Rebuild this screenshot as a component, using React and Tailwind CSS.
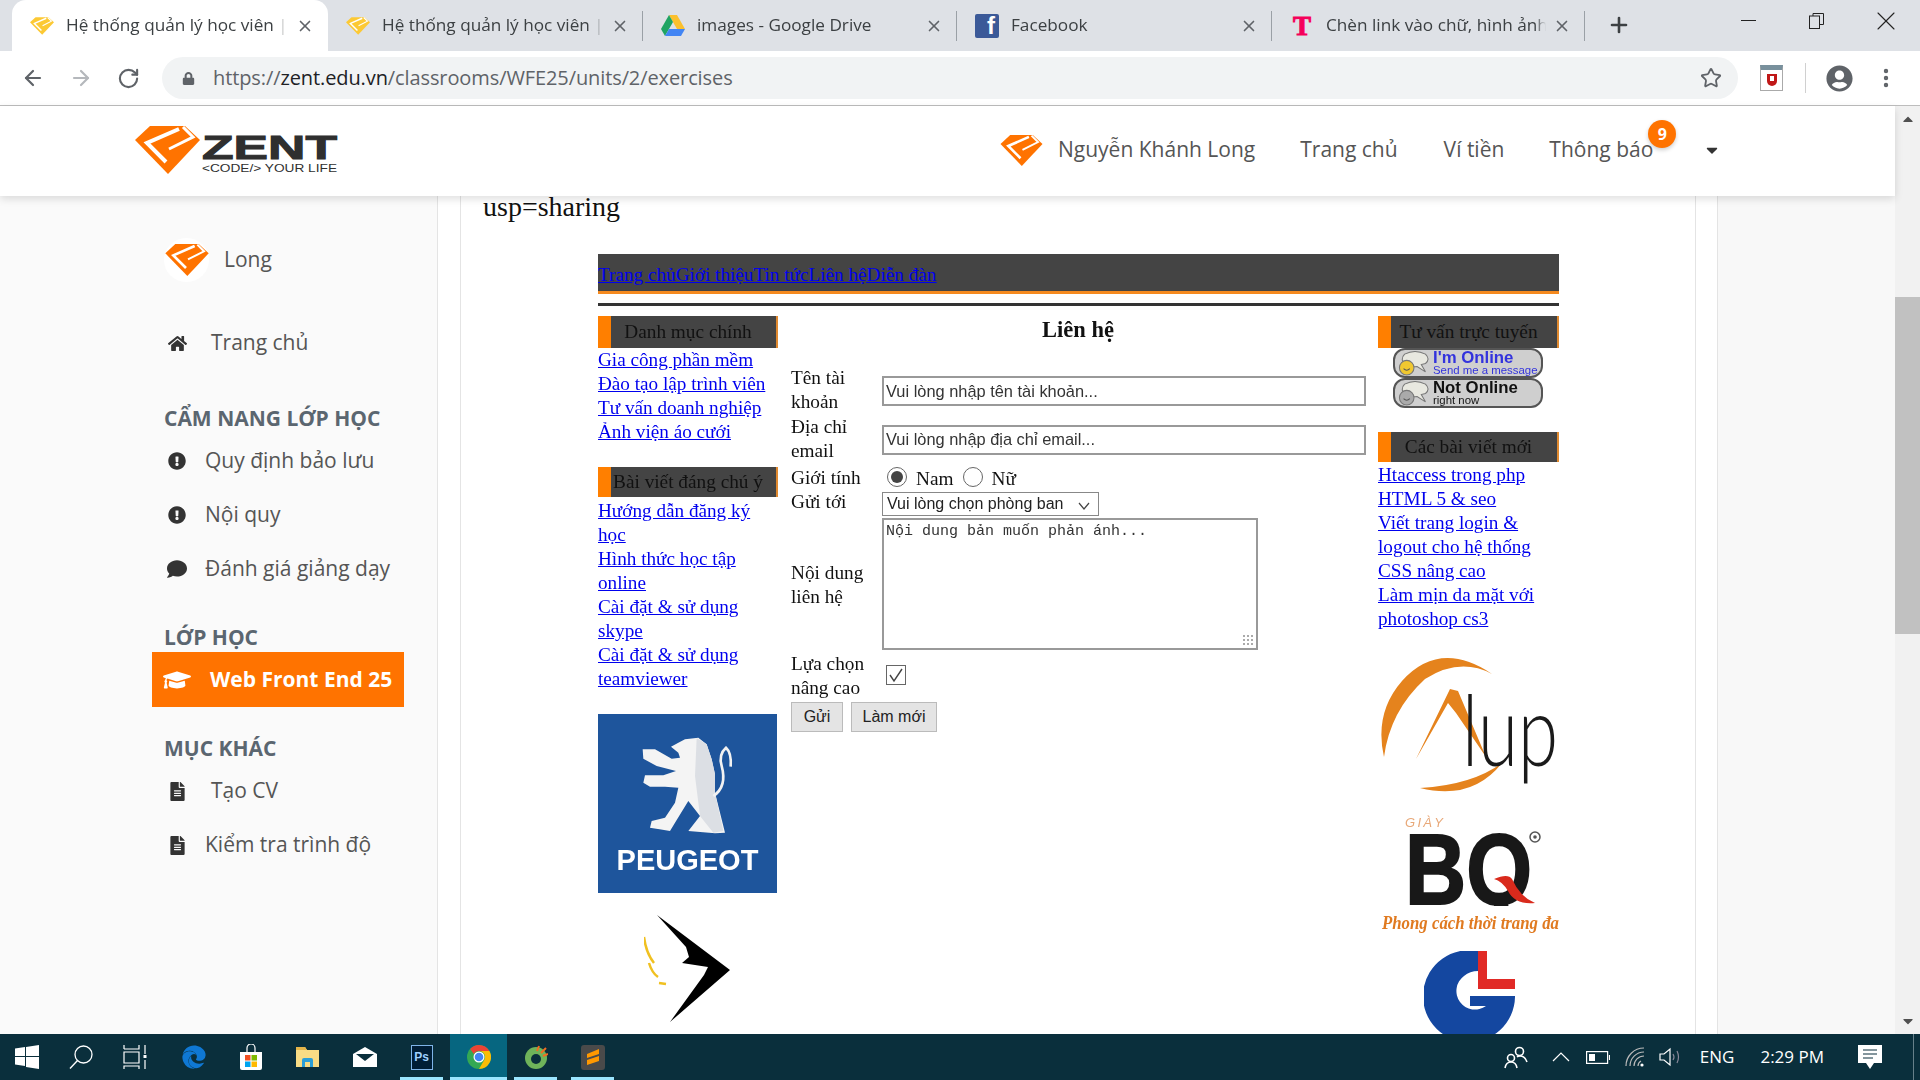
import React from 'react';
import { ArrowLeft, ArrowRight, RotateCw, Star, X, Plus, MoreVertical } from 'lucide-react';
import { FaHome, FaExclamationCircle, FaComment, FaFileAlt, FaGraduationCap, FaLock, FaEdge, FaUserCircle, FaCaretDown, FaCaretUp } from 'react-icons/fa';

const Gem = ({ className, fill = '#ff7300' }) => (
  <svg viewBox="0 0 65 48" className={className}>
    <polygon points="15,0 50,0 65,14 33,48 0,14" fill={fill} />
    <polyline points="44,3 12,17 31,36" fill="none" stroke="#fff" strokeWidth="4" />
    <polyline points="48,1 58,11 34,23" fill="none" stroke="#fff" strokeWidth="3" />
  </svg>
);

const DriveIcon = () => (
  <svg viewBox="0 0 24 21" className="w-[24px] h-[21px]">
    <polygon points="8,0 16,0 24,14 16,14" fill="#fbc02d" />
    <polygon points="8,0 12,7 4,21 0,14" fill="#1fa463" />
    <polygon points="8,14 24,14 20,21 4,21" fill="#4285f4" />
  </svg>
);

const FbIcon = () => (
  <div className="w-[24px] h-[24px] bg-[#3b5998] rounded-[2px] flex items-end justify-end pr-[4px] overflow-hidden">
    <span className="text-white font-bold text-[24px] leading-[24px] font-['Liberation_Sans',sans-serif]">f</span>
  </div>
);

const TIcon = () => (
  <div className="w-[20px] h-[24px] flex items-center justify-center">
    <span className="text-[#f5005a] font-bold text-[27px] leading-[24px] font-['Liberation_Serif',serif] [-webkit-text-stroke:1px_#f5005a]">T</span>
  </div>
);

const tabs = [
  { title: 'Hệ thống quản lý học viên | ZENT', icon: <Gem className="w-[24px] h-[18px]" fill="#fcc934" />, width: 'w-[316px]', active: true },
  { title: 'Hệ thống quản lý học viên | ZENT', icon: <Gem className="w-[24px] h-[18px]" fill="#fcc934" />, width: 'w-[315px]' },
  { title: 'images - Google Drive', icon: <DriveIcon />, width: 'w-[314px]' },
  { title: 'Facebook', icon: <FbIcon />, width: 'w-[315px]' },
  { title: 'Chèn link vào chữ, hình ảnh trong HTML', icon: <TIcon />, width: 'w-[313px]' },
];

const TabBar = () => (
  <div className="h-[51px] bg-[#dee1e6] flex pl-[12px] shrink-0 text-[#3c4043] text-[17.2px] font-['Open_Sans',sans-serif]">
    {tabs.map((t, i) => (
      <div key={i} className={`${t.width} flex items-center pl-[18px] pr-[14px] ${t.active ? 'bg-white rounded-t-[14px]' : 'relative'}`}>
        <div className="w-[24px] flex justify-center shrink-0">{t.icon}</div>
        <div className="ml-[12px] -mt-[1px] w-[220px] h-[26px] leading-[26px] overflow-hidden whitespace-nowrap [mask-image:linear-gradient(90deg,#000_95%,transparent)]">{t.title}</div>
        <X size={18} className="ml-auto text-[#5f6368]" strokeWidth={2.2} />
        {!t.active && <div className="absolute right-0 top-[11px] h-[30px] w-px bg-[#9aa0a6]" />}
      </div>
    ))}
    <Plus size={24} strokeWidth={2.6} className="ml-[22px] mt-[13px] text-[#3c4043]" />
    <div className="ml-auto flex items-start text-[#222]">
      <div className="w-[68px] h-[40px] flex items-center justify-center"><div className="w-[15px] h-px bg-[#222]" /></div>
      <div className="w-[68px] mr-[2px] h-[42px] flex items-center justify-center">
        <svg viewBox="0 0 15 16" className="w-[15px] h-[16px]" fill="none" stroke="#222" strokeWidth="1">
          <path d="M4 3V.5h10.5v11H11" />
          <rect x=".5" y="3" width="10" height="12.5" />
        </svg>
      </div>
      <div className="w-[68px] h-[42px] flex items-center justify-center"><X size={32} strokeWidth={0.8} /></div>
    </div>
  </div>
);

const ToolBar = () => (
  <div className="h-[55px] bg-white border-b border-[#bdbdbd] flex items-center shrink-0 relative">
    <ArrowLeft size={24} className="ml-[21px] text-[#5f6368]" strokeWidth={2.2} />
    <ArrowRight size={24} className="ml-[24px] text-[#b5b8bc]" strokeWidth={2.2} />
    <RotateCw size={23} className="ml-[24px] text-[#5f6368]" strokeWidth={2.2} />
    <div className="ml-[22px] w-[1576px] h-[42px] bg-[#f1f3f4] rounded-full flex items-center pl-[20px] pr-[16px]">
      <FaLock size={13} className="text-[#5f6368]" />
      <div className="ml-[18px] text-[20px] tracking-[-0.1px] font-['Open_Sans',sans-serif] text-[#5f6368]">
        https://<span className="text-[#202124]">zent.edu.vn</span>/classrooms/WFE25/units/2/exercises
      </div>
      <Star size={22} className="ml-auto text-[#5f6368]" strokeWidth={2} />
    </div>
    <div className="ml-[22px] w-[23px] h-[26px] border border-[#aaa] border-t-[5px] border-t-[#78909c] bg-white flex items-center justify-center">
      <div className="w-[10px] h-[12px] bg-[#c01818] rounded-b-[5px] flex justify-center pt-[2px]"><div className="w-[4px] h-[5px] bg-white" /></div>
    </div>
    <div className="ml-[22px] w-px h-[30px] bg-[#d0d0d0]" />
    <FaUserCircle size={27} className="ml-[20px] text-[#5f6368]" />
    <MoreVertical size={24} className="ml-[21px] text-[#5f6368]" strokeWidth={2.4} />
  </div>
);

const Header = () => (
  <div className="h-[90px] bg-white shadow-[0_3px_8px_rgba(0,0,0,0.13)] flex items-center shrink-0 relative z-10 pl-[135px] pb-[2px] font-['Open_Sans',sans-serif] text-[21px] text-[#555]">
    <div className="flex items-center">
      <Gem className="w-[65px] h-[48px]" />
      <svg viewBox="0 0 140 48" className="w-[140px] h-[48px] -ml-[1px]">
        <text x="3" y="33" fontFamily="Liberation Sans" fontWeight="700" fontSize="34" fill="#2f2f2f" textLength="135" lengthAdjust="spacingAndGlyphs" stroke="#2f2f2f" strokeWidth="1">ZENT</text>
        <text x="3" y="46" fontFamily="Liberation Sans" fontSize="11" fill="#2f2f2f" textLength="135" lengthAdjust="spacingAndGlyphs">&lt;CODE/&gt; YOUR LIFE</text>
      </svg>
    </div>
    <Gem className="ml-[661px] w-[43px] h-[31px]" />
    <span className="ml-[15px]">Nguyễn Khánh Long</span>
    <span className="ml-[45px]">Trang chủ</span>
    <span className="ml-[46px]">Ví tiền</span>
    <span className="ml-[45px] relative">
      Thông báo
      <span className="absolute -right-[23px] -top-[14px] w-[28px] h-[28px] rounded-full bg-[#ff7300] text-white text-[16px] font-bold flex items-center justify-center shadow-[0_2px_4px_rgba(0,0,0,0.2)]">9</span>
    </span>
    <FaCaretDown size={18} className="ml-[50px] text-[#333]" />
  </div>
);

const SideItem = ({ icon, children, textClass = 'ml-[18px]' }) => (
  <div className="h-[54px] flex items-center pl-[167px] text-[#555]">
    <span className="w-[20px] flex justify-center text-[#333] shrink-0">{icon}</span>
    <span className={textClass}>{children}</span>
  </div>
);

const SideHead = ({ className, children }) => (
  <div className={`h-[26px] pl-[164px] flex items-center font-bold text-[21px] text-[#5b6670] ${className}`}>{children}</div>
);

const Sidebar = () => (
  <div className="w-[438px] shrink-0 bg-[#fafafa] border-r border-[#e4e4e4] pt-[42px] font-['Open_Sans',sans-serif] text-[21px] text-[#555]">
    <div className="h-[44px] flex items-center pl-[164px]">
      <div className="w-[45px] h-[44px] rounded-full bg-white flex items-center justify-center">
        <Gem className="w-[44px] h-[32px]" />
      </div>
      <span className="ml-[15px]">Long</span>
    </div>
    <div className="mt-[34px]">
      <SideItem icon={<FaHome size={19} />} textClass="ml-[24px]">Trang chủ</SideItem>
    </div>
    <SideHead className="mt-[36px]">CẨM NANG LỚP HỌC</SideHead>
    <div className="mt-[2px]">
      <SideItem icon={<FaExclamationCircle size={18} />}>Quy định bảo lưu</SideItem>
      <SideItem icon={<FaExclamationCircle size={18} />}>Nội quy</SideItem>
      <SideItem icon={<FaComment size={20} />}>Đánh giá giảng dạy</SideItem>
    </div>
    <SideHead className="mt-[29px]">LỚP HỌC</SideHead>
    <div className="mt-[1px] ml-[152px] w-[252px] h-[55px] bg-[#ff7300] flex items-center pl-[11px] text-white font-bold">
      <FaGraduationCap size={28} />
      <span className="ml-[19px]">Web Front End 25</span>
    </div>
    <SideHead className="mt-[29px]">MỤC KHÁC</SideHead>
    <div className="mt-[2px]">
      <SideItem icon={<FaFileAlt size={19} />} textClass="ml-[24px]">Tạo CV</SideItem>
      <SideItem icon={<FaFileAlt size={19} />}>Kiểm tra trình độ</SideItem>
    </div>
  </div>
);

const OldHead = ({ h, children }) => (
  <div className={`${h} w-full bg-[#444] border-l-[13px] border-l-[#ff7f00] border-r-[2px] border-r-[#e08a30] pr-[11px] flex items-center justify-center text-[19.3px] text-[#111] whitespace-nowrap`}>{children}</div>
);

const OldLinks = ({ items }) => (
  <div className="leading-[24px] text-[19.2px] text-[#00e]">
    {items.map((t, i) => <a key={i} href="#" className="block underline whitespace-nowrap">{t}</a>)}
  </div>
);

const Peugeot = () => (
  <div className="mt-[23px] w-[179px] h-[179px] bg-[#1e559c] flex flex-col items-center">
    <svg viewBox="-6 -6 537 375" className="w-[179px] h-[125px]">
      <path d="M255 70 L295 65 L320 85 L335 130 L345 175 L345 230 L375 350 L345 352 L265 345 L300 300 L265 255 L225 320 L210 345 L150 335 L155 315 L195 305 L225 260 L235 215 L195 212 L150 212 L130 200 L135 178 L190 178 L228 165 L170 150 L130 128 L128 100 L165 100 L215 128 L240 125 L235 110 L213 92 L235 80 Z" fill="#f4f4f4" />
      <path d="M290 66 L320 85 L335 130 L345 175 L345 230 L370 345 L340 350 L300 300 L285 180 Z" fill="#dcdfe4" />
      <path d="M340 240 Q382 212 365 150 Q355 115 378 95 Q395 110 392 152" fill="none" stroke="#f2f2f2" strokeWidth="8" />
    </svg>
    <span className="mt-[6px] text-white font-bold text-[29px] leading-[30px] font-['Liberation_Sans',sans-serif]">PEUGEOT</span>
  </div>
);

const Bird = () => (
  <svg viewBox="0 0 90 110" className="mt-[22px] ml-[46px] w-[90px] h-[110px]">
    <polygon points="13,0 86,55 26,107 60,60 64,52 51,50 38,48 45,42 42,32" fill="#000" />
    <path d="M0 22 Q2 38 10 48 M5 48 Q8 58 14 62 M15 68 L22 69" fill="none" stroke="#f0c020" strokeWidth="2.5" />
  </svg>
);

const OnlineBadge = ({ title, sub, titleClass, smile }) => (
  <div className="ml-[15px] w-[150px] h-[30px] bg-[#cfcfcf] border-2 border-[#555] rounded-[12px] flex items-center pl-[3px] leading-none font-['Liberation_Sans',sans-serif]">
    <svg viewBox="0 0 30 24" className="w-[32px] h-[25px] shrink-0">
      <path d="M6 3 Q16 -2 26 3 Q31 8 26 12 L22 13 L26 20 L18 15 Q8 16 5 12 Q2 7 6 3 Z" fill="#e8e8e0" stroke="#777" />
      <circle cx="8" cy="16" r="7" fill={smile ? '#f0c830' : '#aaa'} stroke="#777" />
      <path d="M5 17 Q8 20 11 17" fill="none" stroke="#555" />
    </svg>
    <div className="ml-[3px] flex flex-col">
      <span className={`font-bold text-[16.8px] leading-[14px] ${titleClass}`}>{title}</span>
      <span className={`text-[11.4px] leading-[10px] whitespace-nowrap ${titleClass}`}>{sub}</span>
    </div>
  </div>
);

const AlupBq = () => (
  <svg viewBox="0 0 190 290" className="mt-[20px] ml-[2px] w-[190px] h-[290px] max-w-none shrink-0">
    <path d="M112 23 Q60 -12 22 30 Q-6 62 4 106 Q10 60 45 28 Q80 6 112 23 Z" fill="#e5831d" />
    <path d="M40 137 Q92 150 122 112 Q92 134 40 137 Z" fill="#e5831d" />
    <path d="M36 108 L70 38 L78 40 L106 106 L76 62 L68 52 Z" fill="#e5831d" />
    <text x="82" y="115" fontFamily="Lato" fontWeight="300" fontSize="98" fill="#1a1a1a" textLength="96" lengthAdjust="spacingAndGlyphs">lup</text>
    <text x="25" y="176" fontFamily="Liberation Sans" fontStyle="italic" fontSize="13" fill="#e8a878" textLength="38">GIÀY</text>
    <text x="25" y="253" fontFamily="Liberation Sans" fontWeight="700" fontSize="100" fill="#181818" textLength="127" lengthAdjust="spacingAndGlyphs" stroke="#181818" strokeWidth="2">BQ</text>
    <rect x="100" y="255" width="60" height="26" fill="#fff" />
    <path d="M114 228 Q128 222 132 228 Q140 246 155 252 Q135 254 128 240 Q122 230 114 228 Z" fill="#d92a1c" />
    <circle cx="155" cy="186" r="5" fill="none" stroke="#555" strokeWidth="1.5" />
    <circle cx="155" cy="186" r="1.8" fill="#555" />
    <text x="2" y="278" fontFamily="Liberation Serif" fontStyle="italic" fontWeight="700" fontSize="19" fill="#e07a20" textLength="177" lengthAdjust="spacingAndGlyphs">Phong cách thời trang đa</text>
  </svg>
);

const GlLogo = () => (
  <svg viewBox="0 0 92 92" className="mt-[10px] ml-[46px] w-[92px] h-[92px] max-w-none shrink-0">
    <path d="M54 0 A46 46 0 1 0 91 46 L91 45 L46 45 L46 55 L62 55 A18 18 0 1 1 40 25 Q46 20 54 20 Z" fill="#1447a0" />
    <path d="M54 0 H63 V28 H91 V38 H54 Z" fill="#e12a26" />
  </svg>
);

const inputCls = "w-[484px] h-[30px] border-2 border-[#999] bg-white px-[2px] font-['Liberation_Sans',sans-serif] text-[16.4px] placeholder:text-[#333] outline-none";
const btnCls = 'h-[30px] bg-[#e4e4e4] border border-[#bbb] flex items-center justify-center';

const FormRow = ({ h, label, top, children }) => (
  <div className={`${h} flex ${top ? 'items-start' : 'items-center'}`}>
    <div className="w-[91px] shrink-0 -mt-[2px]">{label}</div>
    {children}
  </div>
);

const OldSite = () => (
  <div className="mt-[32px] ml-[137px] w-[961px] font-['Liberation_Serif',serif] text-[#111] blur-[0.4px]">
    <div className="h-[40px] bg-[#444] border-b-[3px] border-b-[#f58a1f] flex items-center text-[19.2px] text-[#00e] underline pt-[5px]">
      <a href="#">Trang chủ</a><a href="#">Giới thiệu</a><a href="#">Tin tức</a><a href="#">Liên hệ</a><a href="#">Diễn đàn</a>
    </div>
    <div className="mt-[9px] h-[3px] bg-[#333]" />
    <div className="mt-[10px] flex">
      <div className="w-[180px] shrink-0">
        <OldHead h="h-[32px]">Danh mục chính</OldHead>
        <OldLinks items={['Gia công phần mềm', 'Đào tạo lập trình viên', 'Tư vấn doanh nghiệp', 'Ảnh viện áo cưới']} />
        <div className="mt-[23px]"><OldHead h="h-[30px]">Bài viết đáng chú ý</OldHead></div>
        <div className="mt-[2px]">
          <OldLinks items={['Hướng dẫn đăng ký', 'học', 'Hình thức học tập', 'online', 'Cài đặt & sử dụng', 'skype', 'Cài đặt & sử dụng', 'teamviewer']} />
        </div>
        <Peugeot />
        <Bird />
      </div>
      <div className="w-[600px] shrink-0 text-[19.3px] leading-[24px]">
        <div className="h-[51px] text-center font-bold text-[22.5px] leading-[28px]">Liên hệ</div>
        <div className="pl-[13px] flex flex-col">
          <FormRow h="h-[48px]" label={<>Tên tài<br />khoản</>}>
            <input readOnly placeholder="Vui lòng nhập tên tài khoản..." className={inputCls} />
          </FormRow>
          <FormRow h="h-[49px]" label={<>Địa chỉ<br />email</>}>
            <input readOnly placeholder="Vui lòng nhập địa chỉ email..." className={inputCls} />
          </FormRow>
          <div className="mt-[2px] h-[26px] flex">
            <div className="w-[91px]">Giới tính</div>
            <div className="flex items-center pl-[5px] -mt-[2px]">
              <div className="-mt-[3px] w-[20px] h-[20px] rounded-full border border-[#666] flex items-center justify-center"><div className="w-[12px] h-[12px] rounded-full bg-[#444]" /></div>
              <span className="ml-[9px] mt-[1px]">Nam</span>
              <div className="-mt-[3px] ml-[10px] w-[20px] h-[20px] rounded-full border border-[#666] bg-white" />
              <span className="ml-[8px] mt-[1px]">Nữ</span>
            </div>
          </div>
          <FormRow h="h-[26px]" top label="Gửi tới">
            <div className="w-[217px] h-[24px] border border-[#888] flex items-center pl-[4px] pr-[8px] font-['Liberation_Sans',sans-serif] text-[16px] text-[#222]">
              Vui lòng chọn phòng ban
              <svg viewBox="0 0 12 8" className="ml-auto w-[12px] h-[8px] mt-[3px]" fill="none" stroke="#444" strokeWidth="1.2"><path d="M1 1l5 6 5-6" /></svg>
            </div>
          </FormRow>
          <div className="h-[135px] flex">
            <div className="w-[91px] flex items-center pb-[2px]"><span>Nội dung<br />liên hệ</span></div>
            <div className="w-[376px] h-[132px] border-2 border-[#999] relative pl-[2px] pt-[2px] font-['Liberation_Mono',monospace] text-[15px] leading-[20px] text-[#333]">
              Nội dung bản muốn phản ánh...
              <div className="absolute right-[2px] bottom-[2px] w-[12px] h-[12px] bg-[radial-gradient(#aaa_1px,transparent_1.2px)] bg-[length:4px_4px]" />
            </div>
          </div>
          <div className="h-[49px] flex">
            <div className="w-[91px] -mt-[1px]">Lựa chọn<br />nâng cao</div>
            <div className="ml-[4px] mt-[12px] w-[20px] h-[20px] border border-[#666] flex items-center justify-center">
              <svg viewBox="0 0 16 16" className="w-[16px] h-[16px]" fill="none" stroke="#444" strokeWidth="1.4"><path d="M2 8l4 6 8-12" /></svg>
            </div>
          </div>
          <div className="flex gap-[8px] font-['Liberation_Sans',sans-serif] text-[16px] text-[#222]">
            <div className={btnCls + ' w-[52px]'}>Gửi</div>
            <div className={btnCls + ' w-[86px]'}>Làm mới</div>
          </div>
        </div>
      </div>
      <div className="w-[181px] shrink-0">
        <OldHead h="h-[32px]">Tư vấn trực tuyến</OldHead>
        <OnlineBadge title="I'm Online" sub="Send me a message" titleClass="text-[#3333dd]" smile />
        <OnlineBadge title="Not Online" sub="right now" titleClass="text-[#111]" />
        <div className="mt-[24px]"><OldHead h="h-[30px]">Các bài viết mới</OldHead></div>
        <div className="mt-[1px]">
          <OldLinks items={['Htaccess trong php', 'HTML 5 & seo', 'Viết trang login &', 'logout cho hệ thống', 'CSS nâng cao', 'Làm mịn da mặt với', 'photoshop cs3']} />
        </div>
        <AlupBq />
        <GlLogo />
      </div>
    </div>
  </div>
);

const Content = () => (
  <div className="flex-1 min-w-0 flex bg-[#f8f8f8] overflow-hidden">
    <div className="w-[1280px] shrink-0 bg-white border-r border-[#e4e4e4] pl-[22px] pr-[22px]">
      <div className="h-[1000px] w-[1236px] border-x border-[#e4e4e4]">
        <div className="-mt-[4px] pl-[22px] h-[30px] font-['Liberation_Serif',serif] text-[28px] leading-[30px] text-[#111]">usp=sharing</div>
        <OldSite />
      </div>
    </div>
  </div>
);

const Scrollbar = () => (
  <div className="w-[25px] shrink-0 bg-[#f1f1f1] flex flex-col items-center text-[#505050]">
    <div className="h-[26px] flex items-center justify-center"><FaCaretUp size={16} /></div>
    <div className="mt-[165px] w-full h-[337px] bg-[#c1c1c1]" />
    <div className="mt-auto h-[26px] flex items-center justify-center"><FaCaretDown size={16} /></div>
  </div>
);

const ChromeIcon = () => (
  <svg viewBox="0 0 24 24" className="w-[24px] h-[24px]">
    <circle cx="12" cy="12" r="12" fill="#34a853" />
    <path d="M12 0a12 12 0 0 1 10.4 6H12a6 6 0 0 0-5.2 3L3.2 4.1A12 12 0 0 1 12 0z" fill="#ea4335" />
    <path d="M22.4 6A12 12 0 0 1 12 24l5.2-9A6 6 0 0 0 12 6z" fill="#fbbc05" />
    <circle cx="12" cy="12" r="5.5" fill="#fff" />
    <circle cx="12" cy="12" r="4.3" fill="#4285f4" />
  </svg>
);

const taskIcons = [
  { icon: <FaEdge size={24} className="text-[#0f78d4]" /> },
  { icon: (
    <svg viewBox="0 0 24 26" className="w-[24px] h-[26px]">
      <path d="M1 8h22v16a2 2 0 0 1-2 2H3a2 2 0 0 1-2-2z" fill="#fff" />
      <path d="M8 8V4a4 4 0 0 1 8 0v4" fill="none" stroke="#fff" strokeWidth="1.2" />
      <rect x="6" y="11" width="5.5" height="5.5" fill="#f25022" /><rect x="12.5" y="11" width="5.5" height="5.5" fill="#7fba00" />
      <rect x="6" y="17.5" width="5.5" height="5.5" fill="#00a4ef" /><rect x="12.5" y="17.5" width="5.5" height="5.5" fill="#ffb900" />
    </svg>
  ) },
  { icon: (
    <svg viewBox="0 0 23 20" className="w-[23px] h-[20px]">
      <path d="M0 0h9l2 3h12v17H0z" fill="#f8dc85" /><path d="M0 0h9l2 3H0z" fill="#e5b54a" />
      <path d="M6 20v-7a2 2 0 0 1 2-2h7a2 2 0 0 1 2 2v7h-3v-5H9v5z" fill="#2a9fd8" />
    </svg>
  ), },
  { icon: (
    <svg viewBox="0 0 24 20" className="w-[24px] h-[20px]">
      <path d="M0 7L12 0l12 7v13H0z" fill="#fff" /><path d="M3 7h18l-9 7z" fill="#0a2f3c" />
    </svg>
  ) },
  { icon: (
    <div className="w-[22px] h-[25px] bg-[#001e36] border border-[#7fb4e8] flex items-center justify-center text-[#9ed0ff] text-[12px] font-bold font-['Liberation_Sans',sans-serif]">Ps</div>
  ), open: true },
  { icon: <ChromeIcon />, active: true },
  { icon: (
    <svg viewBox="0 0 24 24" className="w-[24px] h-[24px]">
      <circle cx="12" cy="13" r="11" fill="#6fb35a" /><circle cx="12" cy="14" r="5" fill="#0a2f3c" />
      <path d="M13 6l2-5M17 8l5-5M19 11l5-2" stroke="#f26b21" strokeWidth="2" />
    </svg>
  ), open: true },
  { icon: (
    <div className="w-[24px] h-[25px] bg-[#4a4a4a] rounded-[3px] flex items-center justify-center">
      <svg viewBox="0 0 12 16" className="w-[12px] h-[16px]"><path d="M12 0v5L0 9V5zM12 7v5L0 16v-5z" fill="#ff9800" /></svg>
    </div>
  ), open: true },
];

const Taskbar = () => (
  <div className="h-[46px] bg-[#0a2f3c] flex items-center shrink-0 text-[#e8eef0] text-[17px] font-['Open_Sans',sans-serif]">
    <div className="w-[54px] flex justify-center">
      <svg viewBox="0 0 24 24" className="w-[24px] h-[24px]" fill="#fff"><path d="M0 3.5l10-1.4V11H0zM11 2l13-2v11H11zM0 12h10v9L0 19.5zM11 12h13v12l-13-2z" /></svg>
    </div>
    <div className="w-[54px] flex justify-center">
      <svg viewBox="0 0 24 24" className="w-[24px] h-[24px]" fill="none" stroke="#fff" strokeWidth="1.3"><circle cx="14.5" cy="9.5" r="8.5" /><path d="M8.5 15.5L1 23.5" /></svg>
    </div>
    <div className="w-[54px] flex justify-center">
      <svg viewBox="0 0 24 24" className="w-[24px] h-[24px]" fill="none" stroke="#fff" strokeWidth="1.2"><path d="M1 4V0M1 4h15V0M1 7h15v11H1zM1 24v-3h15v3M22 0v9M22 15v9" /><rect x="20.5" y="10" width="3" height="3" fill="#fff" stroke="none" /></svg>
    </div>
    <div className="ml-[3px] flex">
      {taskIcons.map((t, i) => (
        <div key={i} className={`w-[57px] h-[46px] relative flex items-center justify-center ${t.active ? 'bg-[#066680]' : ''}`}>
          {t.icon}
          {(t.open || t.active) && <div className={`absolute bottom-0 h-[3px] bg-[#9be6ff] ${t.active ? 'left-0 right-0' : 'left-[7px] right-[7px]'}`} />}
        </div>
      ))}
    </div>
    <div className="ml-auto flex items-center text-[#fff]">
      <svg viewBox="0 0 24 24" className="w-[24px] h-[24px]" fill="none" stroke="#fff" strokeWidth="1.6">
        <circle cx="15.5" cy="6.5" r="4" /><circle cx="7" cy="13" r="3.5" /><path d="M1 23q1-6 6-6t6 6M13 12q1-1 3-1 5 0 7 6" />
      </svg>
      <svg viewBox="0 0 18 10" className="ml-[24px] w-[18px] h-[10px]" fill="none" stroke="#fff" strokeWidth="1.2"><path d="M1 9l8-8 8 8" /></svg>
      <svg viewBox="0 0 24 13" className="ml-[16px] w-[24px] h-[13px]" fill="none" stroke="#fff" strokeWidth="1.2">
        <rect x=".6" y=".6" width="21" height="11.8" /><rect x="3" y="3" width="6" height="7" fill="#fff" stroke="none" /><path d="M23.5 4v5" />
      </svg>
      <svg viewBox="0 0 20 20" className="ml-[15px] w-[20px] h-[20px]" fill="none" stroke="#bbb" strokeWidth="1.2">
        <path d="M1 19A18 18 0 0 1 19 1M5 19A14 14 0 0 1 19 5M9 19a10 10 0 0 1 10-10M13 19a6 6 0 0 1 3-5" /><circle cx="17" cy="18" r="1.6" fill="#fff" stroke="none" />
      </svg>
      <svg viewBox="0 0 24 20" className="ml-[14px] w-[24px] h-[20px]" fill="none" stroke="#fff" strokeWidth="1.2">
        <path d="M1 7h4l6-5v16l-6-5H1z" /><path d="M14 7q2 3 0 6M18 4q3 6 0 12" stroke="#889" />
      </svg>
      <span className="ml-[17px]">ENG</span>
      <span className="ml-[26px]">2:29 PM</span>
      <svg viewBox="0 0 24 24" className="ml-[34px] w-[24px] h-[24px]">
        <path d="M0 0h24v18h-8l-4 6-4-6H0z" fill="#fff" /><path d="M5 5h14M5 9h14M5 13h10" stroke="#0a2f3c" strokeWidth="1.2" />
      </svg>
      <div className="ml-[31px] mr-[6px] w-px h-[46px] bg-[#66808a]" />
    </div>
  </div>
);

const App = () => (
  <div className="w-[1920px] h-[1080px] overflow-hidden flex flex-col bg-white">
    <TabBar />
    <ToolBar />
    <div className="flex-1 min-h-0 flex">
      <div className="flex-1 min-w-0 flex flex-col">
        <Header />
        <div className="flex-1 min-h-0 flex overflow-hidden">
          <Sidebar />
          <Content />
        </div>
      </div>
      <Scrollbar />
    </div>
    <Taskbar />
  </div>
);

export default App;
